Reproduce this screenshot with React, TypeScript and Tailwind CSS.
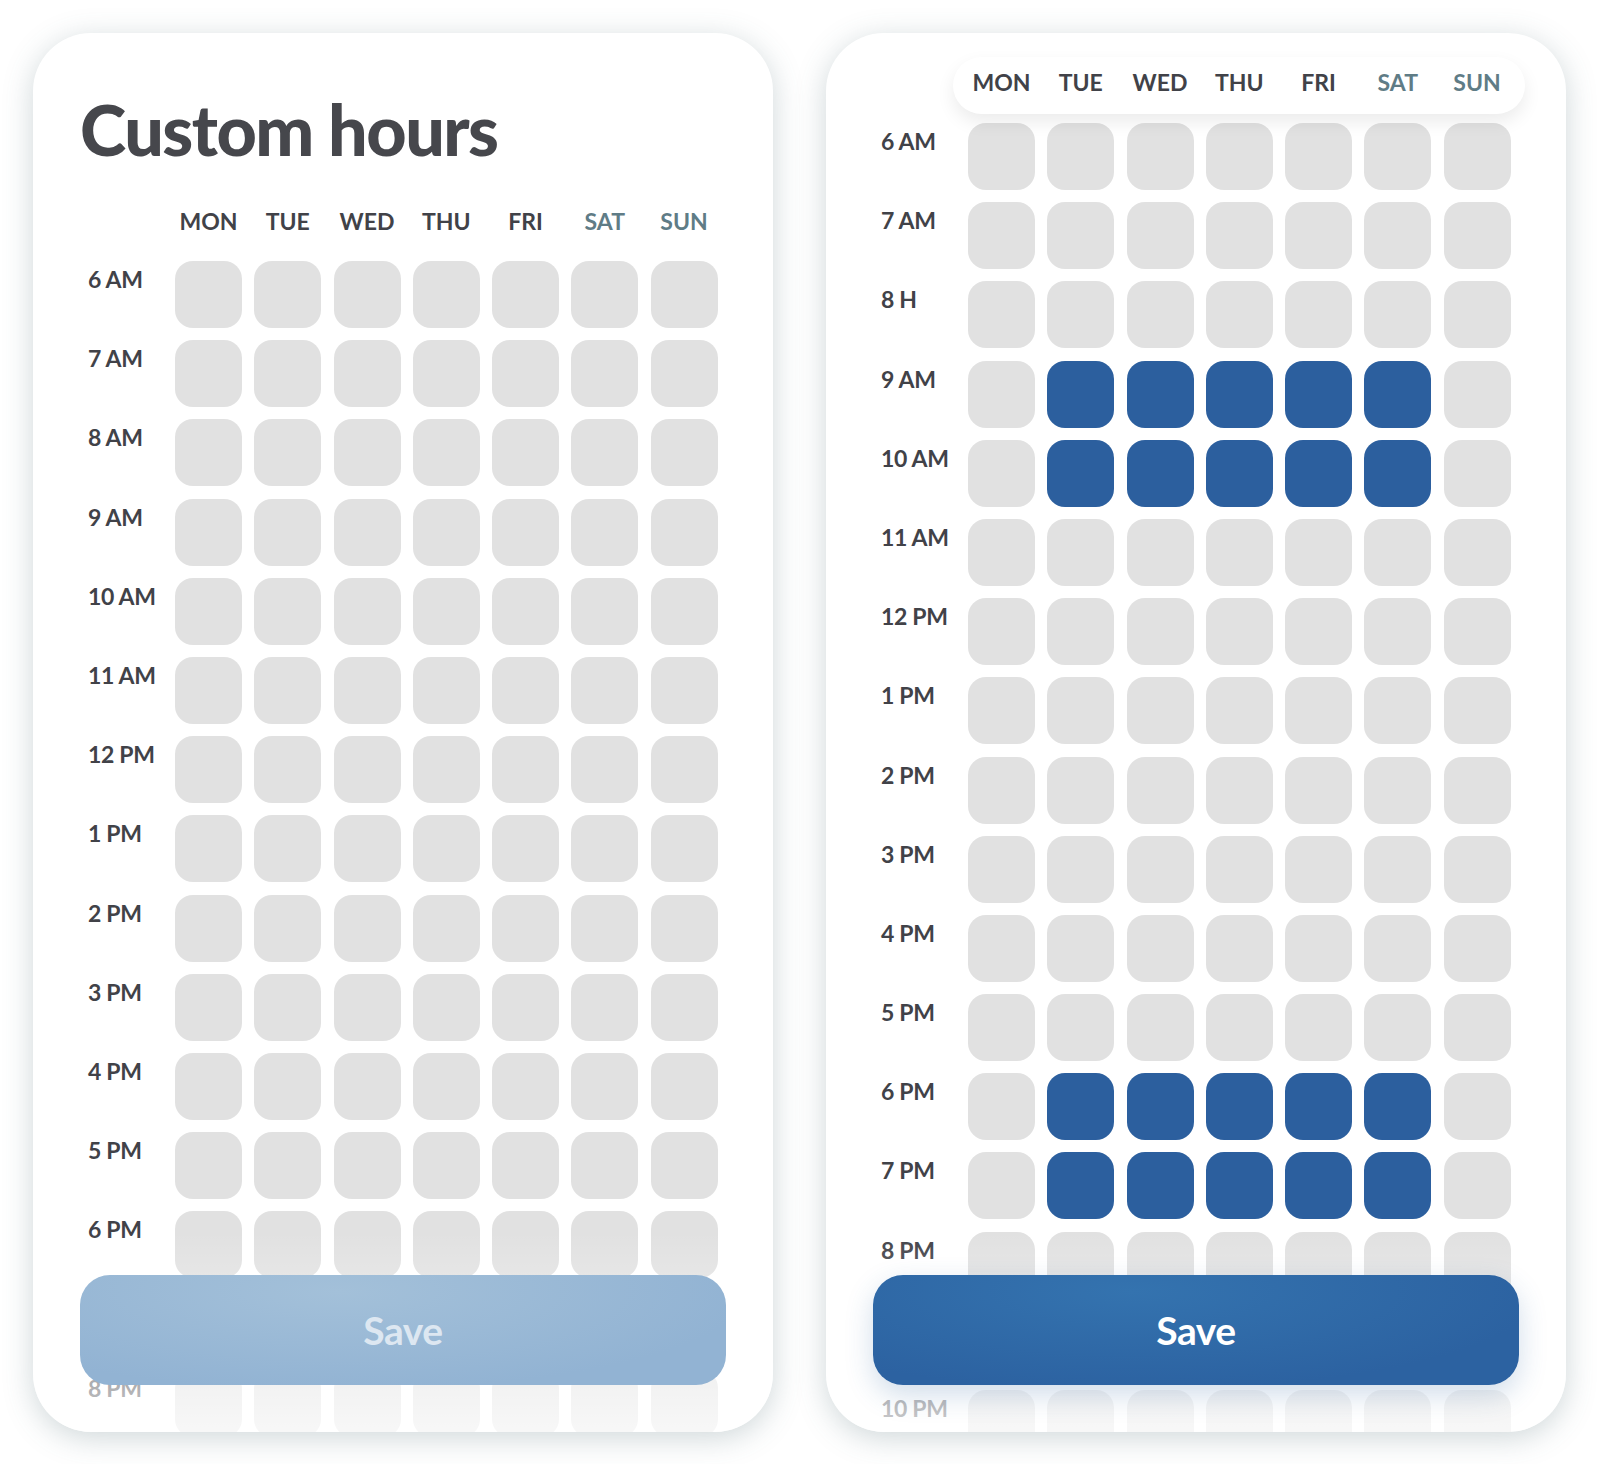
import React from 'react';

const DAYS = ['MON', 'TUE', 'WED', 'THU', 'FRI', 'SAT', 'SUN'];

const LEFT_HOURS = ['6 AM', '7 AM', '8 AM', '9 AM', '10 AM', '11 AM', '12 PM', '1 PM', '2 PM', '3 PM', '4 PM', '5 PM', '6 PM', '7 PM', '8 PM'];
const RIGHT_HOURS = ['6 AM', '7 AM', '8 H', '9 AM', '10 AM', '11 AM', '12 PM', '1 PM', '2 PM', '3 PM', '4 PM', '5 PM', '6 PM', '7 PM', '8 PM', '9 PM', '10 PM'];

// rows (by label) where Tue–Sat are picked in the filled-in card
const PICKED_ROWS = ['9 AM', '10 AM', '6 PM', '7 PM'];

function DayLabel({ day }: { day: string }) {
  const weekend = day === 'SAT' || day === 'SUN';
  return (
    <div className={`w-[67px] text-center text-[23px] leading-[24px] font-bold ${weekend ? 'text-[#5f7c86]' : 'text-[#414248]'}`}>
      {day}
    </div>
  );
}

function Grid({ hours, picked }: { hours: string[]; picked?: string[] }) {
  return (
    <div className="flex flex-col gap-[12.2px]">
      {hours.map((h) => (
        <div key={h} className="flex">
          <div className="w-[87px] pt-[6px] text-[23px] leading-[24px] font-bold text-[#414248] tracking-[-0.3px]">{h}</div>
          <div className="flex gap-[12.25px]">
            {DAYS.map((d, i) => {
              const on = picked?.includes(h) && i >= 1 && i <= 5;
              return (
                <div
                  key={d}
                  className={`h-[67px] w-[67px] rounded-[18px] ${on ? 'bg-[#2c5f9e]' : 'bg-[#e1e1e1]'}`}
                />
              );
            })}
          </div>
        </div>
      ))}
    </div>
  );
}

function SaveButton({ active }: { active: boolean }) {
  return (
    <button
      className={`absolute left-[47px] right-[47px] bottom-[47px] z-20 h-[110px] rounded-[30px] text-[39px] font-bold tracking-[-0.5px] ${
        active
          ? 'bg-[radial-gradient(ellipse_at_40%_15%,#3473af_0%,#2c62a1_75%)] text-white shadow-[0_10px_28px_rgba(44,98,161,0.22)]'
          : 'bg-[radial-gradient(ellipse_at_40%_15%,#a3c0d9_0%,#92b3d3_75%)] text-[#dde7f1]'
      }`}
    >
      Save
    </button>
  );
}

function BottomFade() {
  return (
    <div className="pointer-events-none absolute inset-x-0 bottom-0 z-10 h-[200px] bg-linear-to-b from-white/0 to-white/75" />
  );
}

export default function App() {
  return (
    <div className="flex h-[1464px] w-[1600px] gap-[53px] bg-white px-[33px] pt-[33px] font-['Lato',sans-serif]">

      {/* ── Empty card ─────────────────────────────── */}
      <div className="relative h-[1399px] w-[740px] overflow-hidden rounded-[58px] bg-white shadow-[0_6px_30px_rgba(70,100,110,0.26)]">
        <div className="pl-[55px] pt-[61px]">
          <h1 className="-ml-[8px] h-[70px] text-[70px] leading-[70px] font-black tracking-[-1.5px] text-[#46474c]">Custom hours</h1>
          <div className="mt-[45px] flex pl-[87px] gap-[12.25px]">
            {DAYS.map((d) => <DayLabel key={d} day={d} />)}
          </div>
          <div className="mt-[28px]">
            <Grid hours={LEFT_HOURS} />
          </div>
        </div>
        <BottomFade />
        <SaveButton active={false} />
      </div>

      {/* ── Filled card ────────────────────────────── */}
      <div className="relative h-[1399px] w-[740px] overflow-hidden rounded-[58px] bg-white shadow-[0_6px_30px_rgba(70,100,110,0.26)]">
        <div className="pl-[55px] pt-[24px]">
          <div className="relative z-10 ml-[72px] flex h-[57px] w-[572px] items-center gap-[12.25px] rounded-full bg-white pb-[8px] pl-[15px] shadow-[0_8px_18px_rgba(0,0,0,0.08)]">
            {DAYS.map((d) => <DayLabel key={d} day={d} />)}
          </div>
          <div className="mt-[9px]">
            <Grid hours={RIGHT_HOURS} picked={PICKED_ROWS} />
          </div>
        </div>
        <BottomFade />
        <SaveButton active />
      </div>

    </div>
  );
}
